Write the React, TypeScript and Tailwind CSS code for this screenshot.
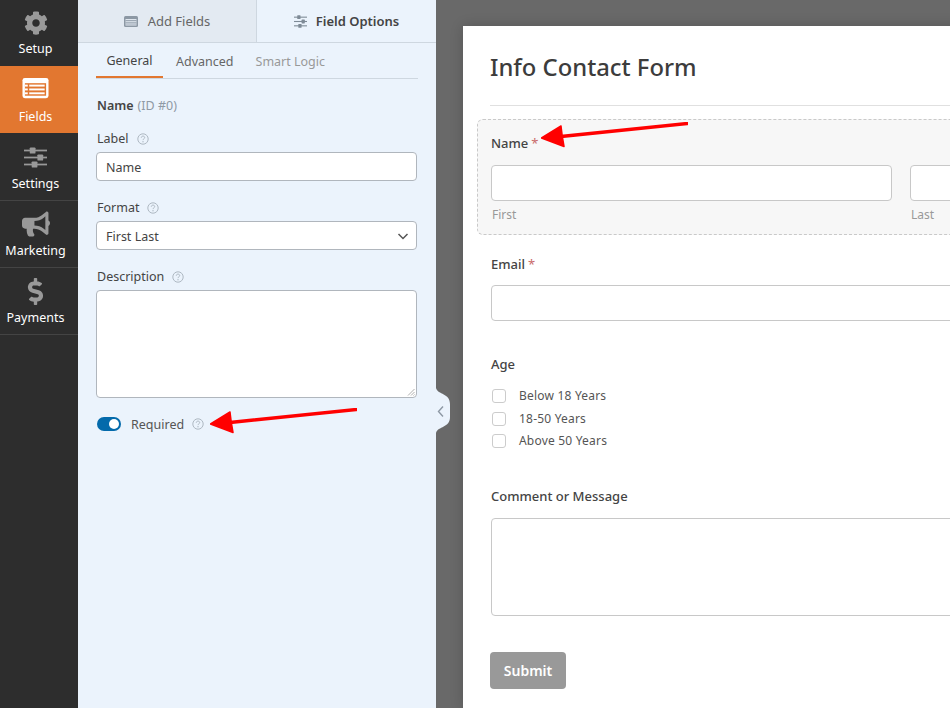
import React from "react";
import { FaCog, FaBullhorn, FaDollarSign } from "react-icons/fa";

const Help = () => (
  <svg width="12" height="12" viewBox="0 0 12 12" fill="none" className="shrink-0">
    <circle cx="6" cy="6" r="5.2" stroke="#aeb8c2" strokeWidth="1" />
    <path d="M4.3 4.7c0-1 .8-1.6 1.7-1.6s1.7.6 1.7 1.5c0 1.2-1.7 1.2-1.7 2.5" stroke="#aeb8c2" strokeWidth="1" />
    <circle cx="6" cy="8.7" r=".7" fill="#aeb8c2" />
  </svg>
);

const FieldsIcon = () => (
  <svg width="27" height="22" viewBox="0 0 28 22" className="mb-[2px]">
    <rect x="0.5" y="0.5" width="27" height="21" rx="2.5" fill="#fff" />
    <rect x="3" y="6" width="22" height="13" fill="#e27730" />
    <g fill="#fff">
      <rect x="3" y="7.5" width="3" height="2" />
      <rect x="3" y="11.5" width="3" height="2" />
      <rect x="3" y="15.5" width="3" height="2" />
      <rect x="7.5" y="7.5" width="16" height="2" />
      <rect x="7.5" y="11.5" width="16" height="2" />
      <rect x="7.5" y="15.5" width="16" height="2" />
    </g>
  </svg>
);

const SlidersIcon = ({ w, h, color, className }: { w: number; h: number; color: string; className?: string }) => (
  <svg width={w} height={h} viewBox="0 0 24 24" preserveAspectRatio="none" fill={color} className={className}>
    <rect x="0" y="3" width="24" height="2" />
    <rect x="0" y="11" width="24" height="2" />
    <rect x="0" y="19" width="24" height="2" />
    <rect x="6" y="0.5" width="6" height="7" rx="1" />
    <rect x="14" y="8.5" width="6" height="7" rx="1" />
    <rect x="8" y="16.5" width="6" height="7" rx="1" />
  </svg>
);

const NavItem = ({
  label,
  icon,
  boxClass,
  labelClass,
}: {
  label: string;
  icon: React.ReactNode;
  boxClass: string;
  labelClass: string;
}) => (
  <div className={`flex flex-col items-center border-b pr-[7px] ${boxClass}`}>
    <div className="flex h-[35px] w-full items-end justify-center">{icon}</div>
    <span className={`text-[12.5px] leading-[20px] text-white ${labelClass}`}>{label}</span>
  </div>
);

const FieldLabel = ({ text }: { text: string }) => (
  <div className="flex h-[18px] items-center gap-[8px] pl-px text-[12.5px] text-[#444444]">
    <span>{text}</span>
    <Help />
  </div>
);

const Arrow = ({ className }: { className: string }) => (
  <svg width={147} height={27} viewBox="0 0 147 27" className={`absolute ${className}`}>
    <path d="M146 1.5 L20 14.5" stroke="#f00" strokeWidth="3.4" strokeLinecap="round" />
    <path d="M0.5 16 L20 4 Q21 14 23 24.5 Z" fill="#f00" stroke="#f00" strokeWidth="1.5" strokeLinejoin="round" />
  </svg>
);

const Check = ({ label, tall }: { label: string; tall?: boolean }) => (
  <div className={`flex items-center text-[12px] tracking-[0.2px] text-[#555555] ${tall ? "h-[23px]" : "h-[22px]"}`}>
    <span className="h-[14px] w-[14px] rounded-[3px] border border-[#cccccc] bg-white" />
    <span className="ml-[13px]">{label}</span>
  </div>
);

export default function App() {
  return (
    <div
      className="relative flex h-[708px] w-[950px] overflow-hidden bg-[#696969]"
      style={{ fontFamily: '"Noto Sans", "Open Sans", sans-serif' }}
    >
      <nav className="w-[78px] shrink-0 bg-[#2d2d2d]">
        <NavItem
          label="Setup"
          boxClass="h-[66px] border-[#2d2d2d]"
          labelClass="mt-[4px]"
          icon={<FaCog size={24} color="#999999" />}
        />
        <NavItem label="Fields" boxClass="h-[67px] border-[#e27730] bg-[#e27730]" labelClass="mt-[6px]" icon={<FieldsIcon />} />
        <NavItem
          label="Settings"
          boxClass="h-[68px] border-[#444444]"
          labelClass="mt-[6px]"
          icon={<SlidersIcon w={23} h={21} color="#999999" />}
        />
        <NavItem
          label="Marketing"
          boxClass="h-[67px] border-[#444444]"
          labelClass="mt-[5px]"
          icon={<FaBullhorn size={28} color="#999999" className="-mb-[2px]" />}
        />
        <NavItem
          label="Payments"
          boxClass="h-[67px] border-[#444444]"
          labelClass="mt-[5px]"
          icon={<FaDollarSign size={27} color="#999999" className="-mb-[2px]" />}
        />
      </nav>

      <aside className="relative w-[358px] shrink-0 bg-[#ebf3fc]">
        <div className="flex h-[43px] border-b border-[#ced7e0]">
          <div className="flex w-[179px] items-center justify-center gap-[10px] border-r border-[#ced7e0] bg-[#e3eaf2] pt-px text-[13px] text-[#666666]">
            <svg width="14" height="11" viewBox="0 0 14 11">
              <rect width="14" height="11" rx="1.5" fill="#8c98a4" />
              <rect x="1.5" y="3" width="11" height="6.5" fill="#dfe6ee" />
              <path d="M1.5 4.5h11M1.5 6.3h11M1.5 8h11" stroke="#8c98a4" strokeWidth="0.8" />
            </svg>
            Add Fields
          </div>
          <div className="flex flex-1 items-center justify-center gap-[9px] pt-px text-[13px] font-semibold text-[#444444]">
            <SlidersIcon w={13} h={13} color="#7e8a96" />
            Field Options
          </div>
        </div>

        <div className="mx-[18px] flex h-[36px] items-center border-b border-[#ced7e0] text-[12.5px]">
          <div className="flex h-full w-[67px] items-center justify-center border-b-2 border-[#e27730] pt-[4px] text-[#444444]">
            General
          </div>
          <div className="ml-[13px] pt-[3px] text-[#666666]">Advanced</div>
          <div className="ml-[22px] pt-[3px] text-[#999999]">Smart Logic</div>
        </div>

        <div className="flex flex-col px-[18px] pt-[18px]">
          <div className="flex h-[18px] items-center gap-1 pl-px text-[12.5px]">
            <span className="font-semibold text-[#444444]">Name</span>
            <span className="text-[#8f9aa5]">(ID #0)</span>
          </div>
          <div className="mt-[15px]">
            <FieldLabel text="Label" />
          </div>
          <div className="mt-[4px] flex h-[29px] w-[321px] items-center rounded-[4px] border border-[#b0b6bd] bg-white pl-[9px] pt-[3px] text-[12.5px] text-[#444444]">
            Name
          </div>
          <div className="mt-[18px]">
            <FieldLabel text="Format" />
          </div>
          <div className="mt-[4px] flex h-[29px] w-[321px] items-center justify-between rounded-[4px] border border-[#b0b6bd] bg-white pl-[9px] pr-[6px] pt-[3px] text-[12.5px] text-[#444444]">
            First Last
            <svg width="14" height="14" viewBox="0 0 14 14" fill="none" className="-mt-[3px]">
              <path d="M2.5 5l4.5 4.5L11.5 5" stroke="#555555" strokeWidth="1.5" />
            </svg>
          </div>
          <div className="mt-[18px]">
            <FieldLabel text="Description" />
          </div>
          <div className="relative mt-[4px] h-[108px] w-[321px] rounded-[4px] border border-[#b0b6bd] bg-white">
            <svg width="8" height="8" viewBox="0 0 8 8" className="absolute bottom-px right-px">
              <path d="M7.5 1L1 7.5M7.5 4L4 7.5M7.5 6.5L6.5 7.5" stroke="#999999" strokeWidth="0.8" />
            </svg>
          </div>
          <div className="mt-[16px] flex h-[19px] items-center pl-px text-[12.5px] text-[#555555]">
            <span className="flex h-[14px] w-[24px] items-center justify-end rounded-full bg-[#036aab] pr-[2px]">
              <span className="h-[10px] w-[10px] rounded-full bg-white" />
            </span>
            <span className="ml-[10px] mt-[4px]">Required</span>
            <span className="ml-[8px]">
              <Help />
            </span>
          </div>
        </div>

        <svg width="14" height="45" viewBox="0 0 14 45" fill="none" className="absolute left-full top-[388px]">
          <path d="M0 0 C2 7 14 5 14 16 L14 29 C14 40 2 38 0 45 Z" fill="#ebf3fc" />
          <path d="M7 18.5L2.5 23.5L7 28.5" stroke="#8d98a4" strokeWidth="1.4" />
        </svg>
      </aside>

      <div className="ml-[27px] mt-[26px] flex-1 bg-white shadow-[0_0_12px_rgba(0,0,0,0.18)]">
        <div className="w-[700px]">
          <div className="mx-[27px] flex h-[80px] items-center border-b border-[#e0e0e0] pt-[5px] text-[23.8px] font-medium text-[#3c3c3c]">
            Info Contact Form
          </div>
          <div className="ml-[14px] mt-[13px] h-[116px] rounded-[6px] border border-dashed border-[#c9c9c9] bg-[#f7f7f7] pl-[13px]">
            <div className="mt-[15px] flex h-[18px] items-center gap-[3px] text-[13px] font-medium text-[#444444]">
              Name <span className="font-normal text-[#c96a6a]">*</span>
            </div>
            <div className="mt-[12px] flex gap-[18px]">
              <div className="w-[401px]">
                <div className="h-[36px] rounded-[4px] border border-[#c8c8c8] bg-white" />
                <div className="mt-[5px] pl-px text-[12px] leading-[18px] text-[#999999]">First</div>
              </div>
              <div className="w-[200px]">
                <div className="h-[36px] rounded-[4px] border border-[#c8c8c8] bg-white" />
                <div className="mt-[5px] pl-px text-[12px] leading-[18px] text-[#999999]">Last</div>
              </div>
            </div>
          </div>

          <div className="pl-[28px]">
            <div className="mt-[21px] flex h-[18px] items-center gap-[3px] text-[13px] font-medium text-[#444444]">
              Email <span className="font-normal text-[#c96a6a]">*</span>
            </div>
            <div className="mt-[11px] h-[36px] rounded-[4px] border border-[#c8c8c8] bg-white" />
            <div className="mt-[35px] flex h-[18px] items-center text-[13px] font-medium text-[#444444]">Age</div>
            <div className="mt-[11px] flex flex-col pl-[1px]">
              <Check label="Below 18 Years" />
              <Check tall label="18-50 Years" />
              <Check label="Above 50 Years" />
            </div>
            <div className="mt-[36px] flex h-[18px] items-center text-[13px] font-medium text-[#444444]">
              Comment or Message
            </div>
            <div className="mt-[12px] h-[98px] rounded-[4px] border border-[#c8c8c8] bg-white" />
            <button className="-ml-px mt-[36px] h-[37px] w-[76px] rounded-[4px] bg-[#999999] text-[14px] font-semibold text-white">
              Submit
            </button>
          </div>
        </div>
      </div>

      <Arrow className="left-[210px] top-[408px]" />
      <Arrow className="left-[541px] top-[122px]" />
    </div>
  );
}
